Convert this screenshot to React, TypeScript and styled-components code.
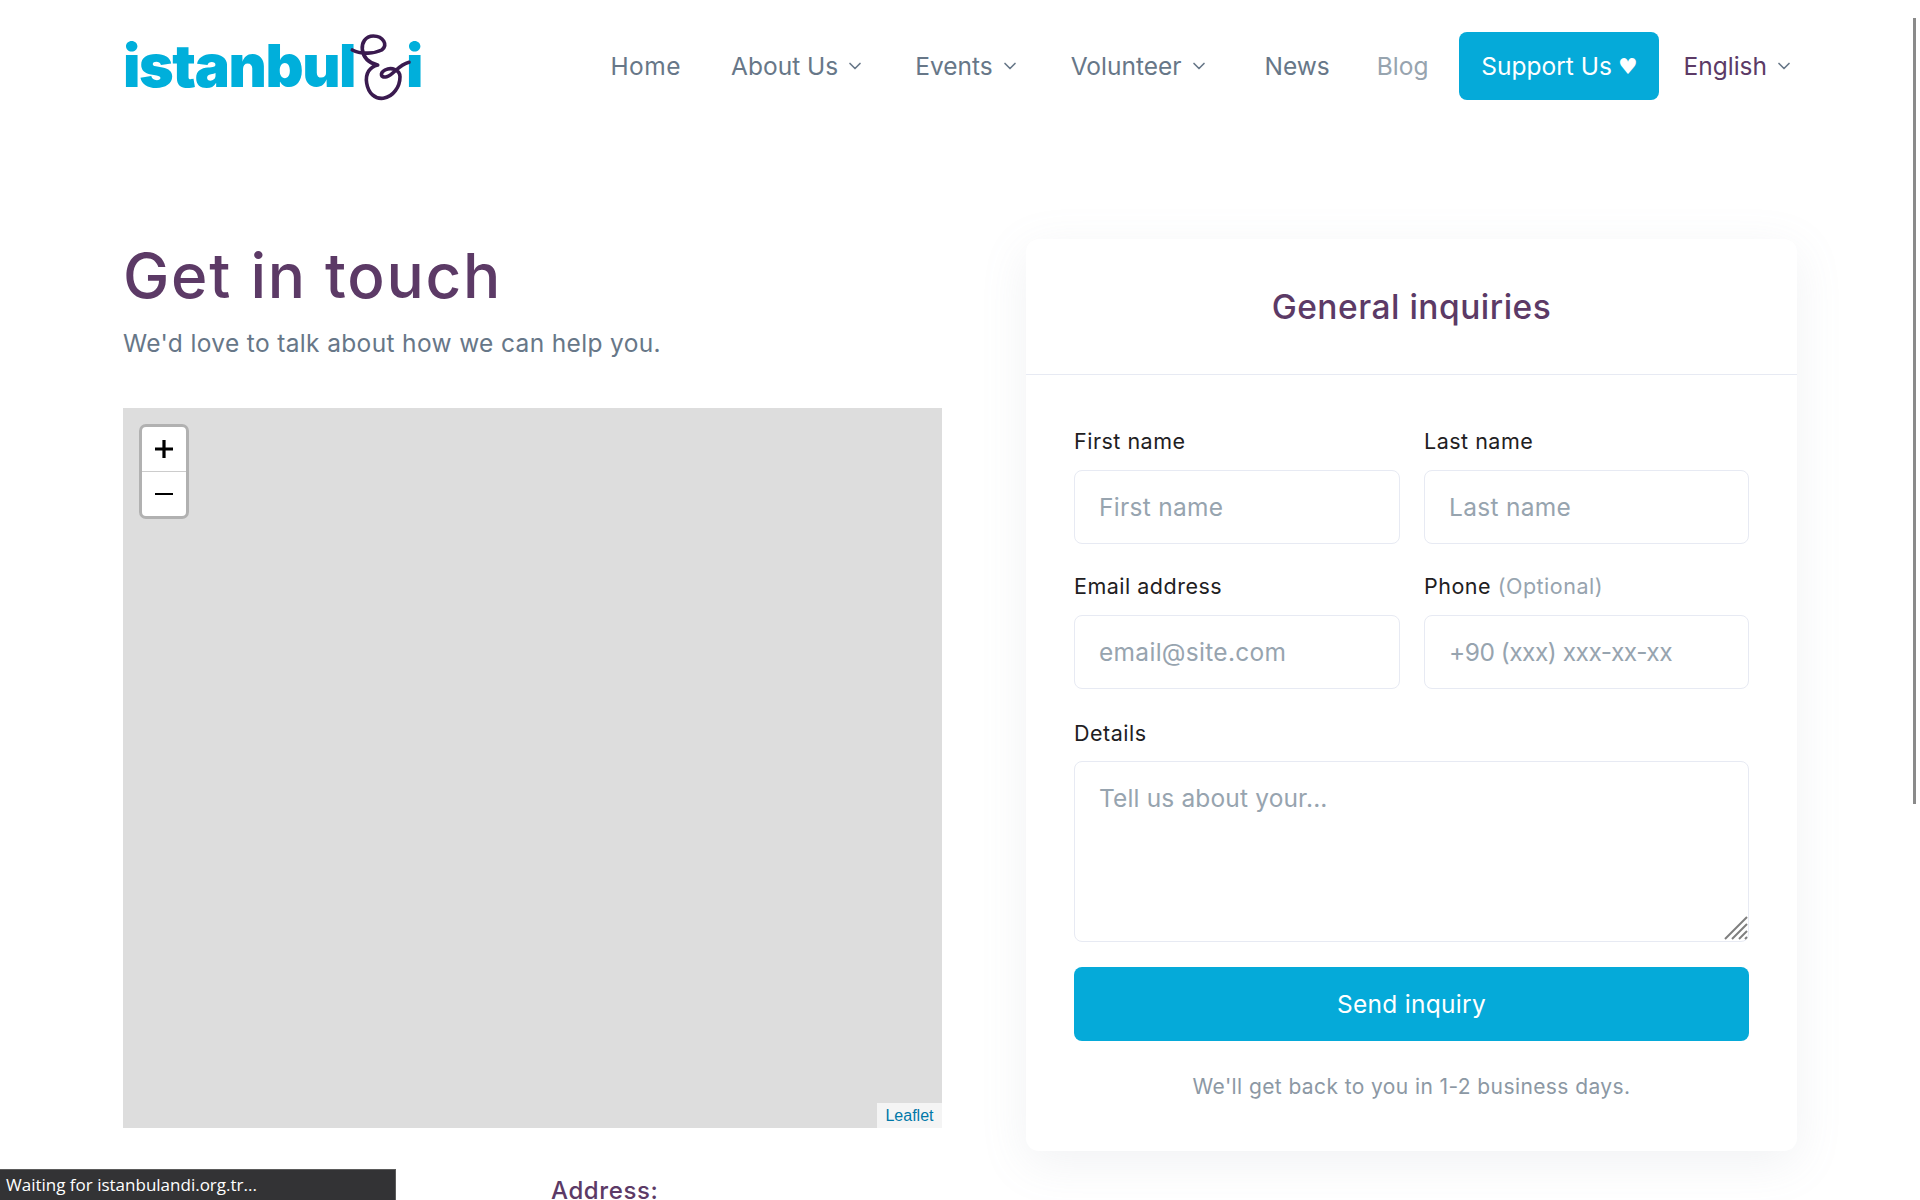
import React from 'react';
import styled, { createGlobalStyle } from 'styled-components';
import { ChevronDown } from 'lucide-react';

const Global = createGlobalStyle`
  html, body { margin: 0; padding: 0; height: 1200px; overflow: hidden; background: #fff; }
  * { box-sizing: border-box; }
  body { font-family: Inter, "Open Sans", sans-serif; }
`;
const Page = styled.div`
  position: relative; width: 1920px; height: 1200px; overflow: hidden; padding: 0 123px;
`;
const Header = styled.header`
  display: flex; align-items: center; justify-content: space-between; height: 132px;
`;
const Logo = styled.a`
  position: relative; display: flex; align-items: center; justify-content: space-between;
  width: 299px; height: 64px; color: #00afdb;
  font: 900 59px/64px Inter, sans-serif; text-decoration: none; letter-spacing: -1.4px;
  svg { position: absolute; left: 222px; top: -4px; width: 80px; height: 75px; }
`;
const Nav = styled.nav`
  display: flex; align-items: center; height: 68px; margin-right: 3px;
`;
const NavItem = styled.a<{ $muted?: boolean; $left: number; $accent?: boolean; $wide?: boolean }>`
  display: flex; align-items: center; gap: 7px; margin-left: ${p => p.$left}px;
  font-size: 24.5px; font-weight: 400; white-space: nowrap;
  letter-spacing: ${p => (p.$wide ? '0.5px' : '0')};
  color: ${p => (p.$accent ? '#5c3a66' : p.$muted ? '#97a4af' : '#677788')};
  svg { color: #677788; flex: none; }
`;
const Support = styled.a`
  display: flex; align-items: center; justify-content: center; gap: 6px; width: 200px; height: 68px;
  margin-left: 31px; border-radius: 8px; background: #05aad9; color: #fff;
  font-size: 24.5px; white-space: nowrap;
`;
const Heart = styled.span`
  font: 400 22px "DejaVu Sans", sans-serif;
`;
const Main = styled.main`
  display: grid; grid-template-columns: 819px 771px; justify-content: space-between; padding-top: 107px;
`;
const Left = styled.section`
  display: flex; flex-direction: column;
`;
const Title = styled.h1`
  margin: 1px 0 0; font-size: 62px; line-height: 72px; font-weight: 450; color: #5c3a66; letter-spacing: 1.75px;
`;
const Lead = styled.p`
  margin: 13px 0 0; font-size: 24.5px; line-height: 36px; color: #677788; letter-spacing: 0.35px;
`;
const MapBox = styled.div`
  position: relative; height: 720px; margin-top: 47px; background: #ddd;
`;
const Zoom = styled.div`
  position: absolute; top: 16px; left: 16px; width: 50px; height: 95px; background: #fff;
  border: 3px solid #b1b1b1; border-radius: 7px; display: flex; flex-direction: column;
`;
const ZoomBtn = styled.div<{ $sep?: boolean }>`
  flex: 1; display: flex; align-items: center; justify-content: center; color: #000;
  border-bottom: ${p => (p.$sep ? '1px solid #ccc' : 'none')};
  svg { width: 18px; height: 18px; }
`;
const Attribution = styled.div`
  position: absolute; right: 0; bottom: 0; width: 65px; height: 25px; background: #f4f4f4;
  display: flex; align-items: center; justify-content: center;
  font: 400 16px "Liberation Sans", Arial, sans-serif; color: #0078a8;
`;
const Contact = styled.div`
  margin: 49px 0 0 428px;
`;
const ContactTitle = styled.h4`
  margin: 0; font-size: 24px; line-height: 28px; font-weight: 500; color: #5c3a66; letter-spacing: 0.6px;
`;
const Card = styled.section`
  height: 912px; background: #fff; border-radius: 13px;
  box-shadow: 0 12px 48px rgba(140, 152, 164, 0.12);
  display: flex; flex-direction: column;
`;
const CardHead = styled.div`
  height: 136px; border-bottom: 1px solid #e7eaf3; display: flex; align-items: center; justify-content: center;
`;
const CardTitle = styled.h3`
  margin: 0; font-size: 33.5px; font-weight: 500; color: #5c3a66; letter-spacing: 0.5px;
`;
const Form = styled.form`
  display: flex; flex-direction: column; padding: 49px 48px 0;
`;
const Row = styled.div`
  display: grid; grid-template-columns: 326px 325px; gap: 24px; margin-bottom: 25px;
`;
const Field = styled.div<{ $top?: number }>`
  display: flex; flex-direction: column; margin-top: ${p => p.$top ?? 0}px;
`;
const Label = styled.label<{ $gap?: number }>`
  height: 35px; margin-bottom: ${p => p.$gap ?? 11}px; line-height: 35px; font-size: 21.5px; color: #1e2022; letter-spacing: 0.5px; white-space: nowrap;
`;
const Optional = styled.span`
  color: #97a4af;
`;
const Input = styled.input<{ $tight?: boolean }>`
  width: 100%; height: 74px; padding: 0 24px; background: #fff; border: 1px solid #e7eaf3; border-radius: 8px;
  font: 400 24.5px Inter, sans-serif; letter-spacing: ${p => (p.$tight ? '-0.5px' : '0.3px')}; outline: none;
  &::placeholder { color: #97a4af; opacity: 1; }
`;
const Area = styled.textarea`
  display: block; width: 100%; height: 181px; padding: 18px 24px; background: #fff; border: 1px solid #e7eaf3; border-radius: 8px;
  font: 400 24.5px/36px Inter, sans-serif; letter-spacing: 0.15px; outline: none; resize: vertical;
  &::-webkit-resizer { display: none; }
  &::placeholder { color: #97a4af; opacity: 1; }
`;
const AreaWrap = styled.div`
  position: relative; height: 181px; margin-bottom: 25px;
`;
const Grip = styled.svg`
  position: absolute; right: 1px; bottom: 2px; width: 24px; height: 24px; pointer-events: none;
`;
const Submit = styled.button`
  display: block; width: 100%; height: 74px; border: 0; border-radius: 8px; background: #05aad9; color: #fff;
  font: 400 24.5px Inter, sans-serif; letter-spacing: 0.3px;
`;
const Note = styled.p`
  margin: 26px 0 0; text-align: center; font-size: 21px; line-height: 40px; color: #8c98a4; letter-spacing: 0.4px; white-space: nowrap;
`;
const StatusBar = styled.div`
  position: absolute; left: 0; bottom: 0; width: 396px; height: 31px; padding-left: 6px;
  background: #333335; border-top: 1px solid #5b5b5b; border-right: 1px solid #5b5b5b;
  color: #fff; font: 400 17px/30px "Open Sans", sans-serif;
`;
const Thumb = styled.div`
  position: absolute; top: 18px; right: 4px; width: 3px; height: 786px; background: #8a8a8a;
`;

const Swirl = () => (
  <svg viewBox="0 0 80 75" fill="none" stroke="#3a1a4f" strokeWidth="3.6" strokeLinecap="round" strokeLinejoin="round">
    <path d="M7.3 20 C16.7 25 30 23.3 36.7 20 C43.3 15 38.3 6 28.3 6 C20 6 16.7 13.3 17.3 19.3 C18.3 28.3 25 33.3 32.7 35 C25 36.7 20 43.3 21.7 53.3 C23.3 63.3 30 69.3 38.3 68.3 C48.3 66.7 55 56.7 55 46.7 C55 40 46.7 36.7 40 40 C35 42.7 35 48.3 41.7 46.7 C48.3 45 53.3 35 64 32.3" />
  </svg>
);

const Chevron = () => <ChevronDown size={20} strokeWidth={2} />;

export default function App() {
  return (
    <Page>
      <Global />
      <Header>
        <Logo>
          <span>istanbul</span>
          <span>i</span>
          <Swirl />
        </Logo>
        <Nav>
          <NavItem $left={0} $wide>Home</NavItem>
          <NavItem $left={50}>About Us <Chevron /></NavItem>
          <NavItem $left={50}>Events <Chevron /></NavItem>
          <NavItem $left={51}>Volunteer <Chevron /></NavItem>
          <NavItem $left={56}>News</NavItem>
          <NavItem $left={47} $muted>Blog</NavItem>
          <Support>Support Us <Heart>♥</Heart></Support>
          <NavItem $left={24} $accent>English <Chevron /></NavItem>
        </Nav>
      </Header>
      <Main>
        <Left>
          <Title>Get in touch</Title>
          <Lead>We'd love to talk about how we can help you.</Lead>
          <MapBox>
            <Zoom>
              <ZoomBtn $sep>
                <svg viewBox="0 0 18 18"><path d="M0 7.6h18v3H0zM7.4 0h3.2v18H7.4z" fill="#000" /></svg>
              </ZoomBtn>
              <ZoomBtn>
                <svg viewBox="0 0 18 18"><path d="M0 8h18v2H0z" fill="#000" /></svg>
              </ZoomBtn>
            </Zoom>
            <Attribution>Leaflet</Attribution>
          </MapBox>
          <Contact><ContactTitle>Address:</ContactTitle></Contact>
        </Left>
        <Card>
          <CardHead><CardTitle>General inquiries</CardTitle></CardHead>
          <Form>
            <Row>
              <Field><Label>First name</Label><Input placeholder="First name" /></Field>
              <Field><Label>Last name</Label><Input placeholder="Last name" /></Field>
            </Row>
            <Row>
              <Field><Label>Email address</Label><Input placeholder="email@site.com" /></Field>
              <Field><Label>Phone <Optional>(Optional)</Optional></Label><Input $tight placeholder="+90 (xxx) xxx-xx-xx" /></Field>
            </Row>
            <Field $top={2}>
              <Label $gap={10}>Details</Label>
              <AreaWrap>
                <Area placeholder="Tell us about your..." />
                <Grip viewBox="0 0 24 24" stroke="#7f7f7f" strokeWidth="2">
                  <path d="M1 23 23 1M8 23 23 8M15 23l8-8M21 23l2-2" />
                </Grip>
              </AreaWrap>
            </Field>
            <Submit type="button">Send inquiry</Submit>
            <Note>We'll get back to you in 1-2 business days.</Note>
          </Form>
        </Card>
      </Main>
      <StatusBar>Waiting for istanbulandi.org.tr...</StatusBar>
      <Thumb />
    </Page>
  );
}
